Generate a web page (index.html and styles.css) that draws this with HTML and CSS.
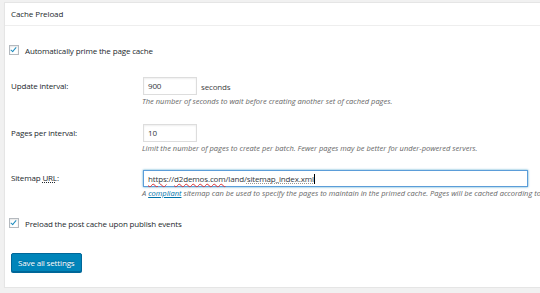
FILE: index.html
```html
<!DOCTYPE html>
<html lang="en">
<head>
    <meta charset="UTF-8">
    <title>Cache Preload</title>
    <link rel="stylesheet" href="styles.css">
</head>
<body>
    <div class="postbox">
        <h3 class="hndle">Cache Preload</h3>
        <div class="inside">
            <label class="check-row first">
                <span class="checkbox"></span>
                Automatically prime the page cache
            </label>

            <div class="field-row row-interval">
                <div class="field-label">Update interval:</div>
                <div class="field-value">
                    <div class="input-line">
                        <span class="text-input small">900</span>
                        <span class="unit">seconds</span>
                    </div>
                    <p class="description">The number of seconds to wait before creating another set of cached pages.</p>
                </div>
            </div>

            <div class="field-row row-pages">
                <div class="field-label">Pages per interval:</div>
                <div class="field-value">
                    <div class="input-line">
                        <span class="text-input small">10</span>
                    </div>
                    <p class="description">Limit the number of pages to create per batch. Fewer pages may be better for under-powered servers.</p>
                </div>
            </div>

            <div class="field-row row-sitemap">
                <div class="field-label">Sitemap <span class="acronym">URL</span>:</div>
                <div class="field-value">
                    <div class="input-line">
                        <span class="text-input wide focused"><span class="spell">https</span>://<span class="spell">d2demos.com</span>/land/<span class="spell-part">sitemap_index.xml</span><span class="caret"></span></span>
                    </div>
                    <p class="description">A <a href="#">compliant</a> sitemap can be used to specify the pages to maintain in the primed cache. Pages will be cached according to the priorities specified in the XML file.</p>
                </div>
            </div>

            <label class="check-row second">
                <span class="checkbox"></span>
                Preload the post cache upon publish events
            </label>

            <button class="button-primary">Save all settings</button>
        </div>
    </div>
</body>
</html>
```

FILE: styles.css
```css
body {
    margin: 0;
    padding: 2px 0 0 4px;
    background-color: #f1f1f1;
    font-family: "Open Sans", Arial, sans-serif;
    color: #23282d;
    overflow: hidden;
}

.postbox {
    background-color: #fff;
    border: 1px solid #e5e5e5;
    border-right: none;
    box-shadow: 0 1px 1px rgba(0, 0, 0, 0.04);
    height: 284px;
    overflow: hidden;
}

.hndle {
    margin: 0;
    padding: 0 6px;
    height: 22px;
    line-height: 22px;
    font-size: 8px;
    letter-spacing: -0.1px;
    font-weight: normal;
    border-bottom: 1px solid #eee;
}

.inside {
    padding: 0 6px;
    font-size: 8px;
    letter-spacing: -0.15px;
}

.check-row {
    display: flex;
    align-items: center;
    gap: 6px;
    height: 14px;
    margin-left: -2px;
}

.check-row.first {
    margin-top: 17px;
}

.check-row.second {
    margin-top: 18px;
}

.checkbox {
    position: relative;
    width: 8px;
    height: 8px;
    border: 1px solid #b4b9be;
    background-color: #fff;
    box-shadow: inset 0 1px 2px rgba(0, 0, 0, 0.1);
}

.checkbox::after {
    content: "";
    position: absolute;
    left: 2px;
    top: 0;
    width: 2px;
    height: 5px;
    border: solid #1e8cbe;
    border-width: 0 1.5px 1.5px 0;
    transform: rotate(40deg);
}

.field-row {
    display: flex;
}

.row-interval {
    margin-top: 20px;
}

.row-pages {
    margin-top: 18px;
}

.row-sitemap {
    margin-top: 16px;
}

.field-label {
    width: 132px;
    flex-shrink: 0;
    line-height: 18px;
}

.acronym {
    text-decoration: underline dotted;
}

.field-value {
    flex: 1;
    min-width: 0;
}

.input-line {
    display: flex;
    align-items: center;
    gap: 4px;
    height: 18px;
}

.text-input {
    box-sizing: border-box;
    height: 18px;
    line-height: 16px;
    padding: 0 4px;
    border: 1px solid #ddd;
    box-shadow: inset 0 1px 2px rgba(0, 0, 0, 0.07);
    white-space: nowrap;
    color: #32373c;
}

.text-input.small {
    width: 54px;
}

.text-input.wide {
    width: 385px;
    height: 17px;
    line-height: 15px;
}

.text-input.focused {
    border-color: #5b9dd9;
    box-shadow: 0 0 2px rgba(30, 140, 190, 0.8);
}

.spell {
    text-decoration: underline wavy #dc3232 0.5px;
}

.spell-part {
    text-decoration: underline dotted #999;
}

.caret {
    display: inline-block;
    width: 1px;
    height: 10px;
    background-color: #000;
    vertical-align: middle;
}

.unit {
    color: #444;
}

.description {
    margin: 1px 0 0 -1px;
    font-size: 7.5px;
    letter-spacing: 0;
    font-style: italic;
    color: #666;
    white-space: nowrap;
}

.description a {
    color: #0073aa;
}

.button-primary {
    display: block;
    margin-top: 23px;
    height: 19px;
    padding: 0 6px;
    font-family: inherit;
    font-size: 8px;
    letter-spacing: -0.15px;
    color: #fff;
    background-color: #0085ba;
    border: 1px solid #006799;
    border-radius: 2px;
    box-shadow: 0 1px 0 #006799;
    text-shadow: 0 -1px 1px #006799;
}
```
